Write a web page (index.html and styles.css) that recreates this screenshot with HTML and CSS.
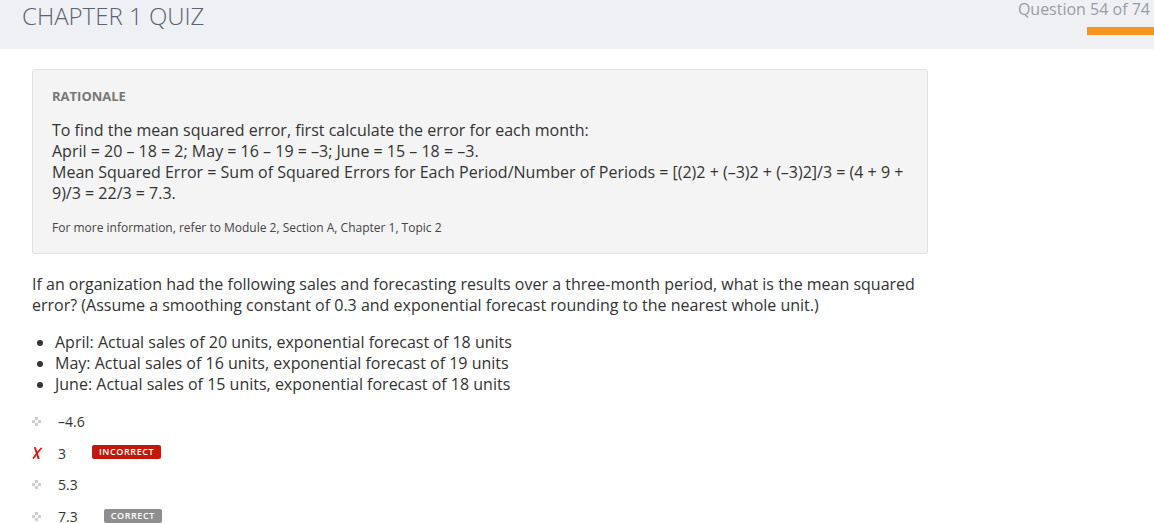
FILE: index.html
```html
<!DOCTYPE html>
<html>
<head>
<meta charset="utf-8">
<link rel="stylesheet" href="styles.css">
</head>
<body>
<header class="top">
  <h1 class="title">CHAPTER 1 QUIZ</h1>
  <div class="progress">
    <div class="qcount">Question 54 of 74</div>
    <div class="bar"></div>
  </div>
</header>
<main class="content">
  <section class="rationale">
    <h2 class="rat-head">RATIONALE</h2>
    <p class="rat-text">To find the mean squared error, first calculate the error for each month:<br>April = 20 – 18 = 2; May = 16 – 19 = –3; June = 15 – 18 = –3.<br>Mean Squared Error = Sum of Squared Errors for Each Period/Number of Periods = [(2)2 + (–3)2 + (–3)2]/3 = (4 + 9 + 9)/3 = 22/3 = 7.3.</p>
    <p class="rat-ref">For more information, refer to Module 2, Section A, Chapter 1, Topic 2</p>
  </section>
  <p class="question">If an organization had the following sales and forecasting results over a three-month period, what is the mean squared error? (Assume a smoothing constant of 0.3 and exponential forecast rounding to the nearest whole unit.)</p>
  <ul class="facts">
    <li>April: Actual sales of 20 units, exponential forecast of 18 units</li>
    <li>May: Actual sales of 16 units, exponential forecast of 19 units</li>
    <li>June: Actual sales of 15 units, exponential forecast of 18 units</li>
  </ul>
  <ul class="options">
    <li class="opt"><span class="mark"><svg width="9" height="9" viewBox="0 0 9 9"><rect x="3" y="0" width="3" height="3" fill="#cfcfcf"/><rect x="0" y="3" width="3" height="3" fill="#cfcfcf"/><rect x="6" y="3" width="3" height="3" fill="#cfcfcf"/><rect x="3" y="6" width="3" height="3" fill="#cfcfcf"/></svg></span><span class="val">–4.6</span></li>
    <li class="opt"><span class="mark"><svg width="10" height="12" viewBox="0 0 10 12"><path d="M3 1 Q4.5 5 6.5 11.5" stroke="#e8130c" stroke-width="2" fill="none" stroke-linecap="round"/><path d="M9 1.5 Q5 6 1.5 11" stroke="#e8130c" stroke-width="1.8" fill="none" stroke-linecap="round"/></svg></span><span class="val">3</span><span class="badge bad">INCORRECT</span></li>
    <li class="opt"><span class="mark"><svg width="9" height="9" viewBox="0 0 9 9"><rect x="3" y="0" width="3" height="3" fill="#cfcfcf"/><rect x="0" y="3" width="3" height="3" fill="#cfcfcf"/><rect x="6" y="3" width="3" height="3" fill="#cfcfcf"/><rect x="3" y="6" width="3" height="3" fill="#cfcfcf"/></svg></span><span class="val">5.3</span></li>
    <li class="opt"><span class="mark"><svg width="9" height="9" viewBox="0 0 9 9"><rect x="3" y="0" width="3" height="3" fill="#cfcfcf"/><rect x="0" y="3" width="3" height="3" fill="#cfcfcf"/><rect x="6" y="3" width="3" height="3" fill="#cfcfcf"/><rect x="3" y="6" width="3" height="3" fill="#cfcfcf"/></svg></span><span class="val">7.3</span><span class="badge good">CORRECT</span></li>
  </ul>
</main>
</body>
</html>
```
FILE: styles.css
```css
* { box-sizing: border-box; }
html, body { margin: 0; padding: 0; background: #fff; }
body { font-family: "Open Sans", sans-serif; color: #333; overflow: hidden; }

.top {
  height: 49px;
  background: #eff0f4;
  display: flex;
  justify-content: space-between;
  align-items: flex-start;
}
.title {
  margin: 0;
  padding: 1px 0 0 22px;
  font-weight: 300;
  font-size: 24px;
  line-height: 30px;
  color: #5b6271;
}
.progress {
  display: flex;
  flex-direction: column;
  align-items: flex-end;
}
.qcount {
  font-size: 16px;
  line-height: 20px;
  color: #999da5;
  padding-right: 4px;
  margin-top: -1px;
}
.bar {
  margin-top: 8px;
  width: 67px;
  height: 8px;
  background: #f7941d;
}

.content { padding: 20px 0 0 32px; width: 928px; }

.rationale {
  background: #f4f4f4;
  border: 1px solid #e2e2e2;
  border-radius: 3px;
  padding: 17px 19px 16px 19px;
}
.rat-head {
  margin: 0;
  font-size: 13px;
  font-weight: 700;
  line-height: 18px;
  color: #777;
}
.rat-text {
  margin: 15px 0 0;
  font-size: 16px;
  line-height: 21px;
  color: #333;
}
.rat-ref {
  margin: 15px 0 0;
  font-size: 12px;
  line-height: 18px;
  color: #444;
}

.question {
  margin: 20px 0 0;
  font-size: 16px;
  line-height: 21px;
  width: 890px;
}
.facts {
  margin: 16px 0 0;
  padding-left: 23px;
  font-size: 16px;
  line-height: 21px;
}
.options {
  list-style: none;
  margin: 11px 0 0;
  padding: 0;
}
.opt {
  display: flex;
  align-items: center;
  height: 31.6px;
  font-size: 14px;
}
.mark {
  width: 26px;
  display: flex;
  align-items: center;
}
.opt .val { color: #333; }
.badge {
  margin-left: 26px;
  font-size: 9px;
  font-weight: 600;
  letter-spacing: 0.6px;
  color: #fff;
  line-height: 14px;
  padding: 0 7px;
  border-radius: 2px;
  position: relative;
  top: -1px;
}
.badge.bad { background: #c4170b; }
.badge.good { background: #8e8e8e; }
```
